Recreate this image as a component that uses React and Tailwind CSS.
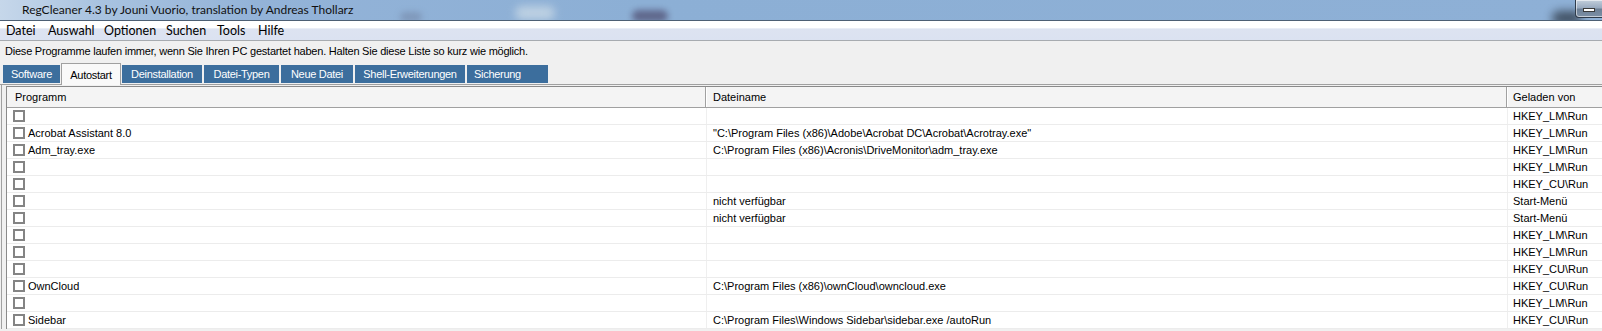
import React from "react";

const rows = [
  ["", "", "HKEY_LM\\Run"],
  ["Acrobat Assistant 8.0", "\"C:\\Program Files (x86)\\Adobe\\Acrobat DC\\Acrobat\\Acrotray.exe\"", "HKEY_LM\\Run"],
  ["Adm_tray.exe", "C:\\Program Files (x86)\\Acronis\\DriveMonitor\\adm_tray.exe", "HKEY_LM\\Run"],
  ["", "", "HKEY_LM\\Run"],
  ["", "", "HKEY_CU\\Run"],
  ["", "nicht verfügbar", "Start-Menü"],
  ["", "nicht verfügbar", "Start-Menü"],
  ["", "", "HKEY_LM\\Run"],
  ["", "", "HKEY_LM\\Run"],
  ["", "", "HKEY_CU\\Run"],
  ["OwnCloud", "C:\\Program Files (x86)\\ownCloud\\owncloud.exe", "HKEY_CU\\Run"],
  ["", "", "HKEY_LM\\Run"],
  ["Sidebar", "C:\\Program Files\\Windows Sidebar\\sidebar.exe /autoRun", "HKEY_CU\\Run"],
];

const tabs = [
  { label: "Software", w: "w-[57px]", align: "justify-center" },
  { label: "Autostart", w: "w-[60px]", active: true, align: "justify-center" },
  { label: "Deinstallation", w: "w-[80px]", align: "justify-center" },
  { label: "Datei-Typen", w: "w-[75px]", align: "justify-center" },
  { label: "Neue Datei", w: "w-[72px]", align: "justify-center" },
  { label: "Shell-Erweiterungen", w: "w-[110px]", align: "justify-center" },
  { label: "Sicherung", w: "w-[81px]", align: "justify-start pl-[7px]" },
];

const menu = [
  { label: "Datei", w: "w-[42px]" },
  { label: "Auswahl", w: "w-[56px]" },
  { label: "Optionen", w: "w-[62px]" },
  { label: "Suchen", w: "w-[51px]" },
  { label: "Tools", w: "w-[41px]" },
  { label: "Hilfe", w: "w-[40px]" },
];

export default function App() {
  return (
    <div className="w-[1602px] h-[331px] overflow-hidden bg-[#f0f0f0] text-black font-['Liberation_Sans',Arial,sans-serif]">
      {/* Title bar */}
      <div className="relative h-[21px] border-b border-[#4d5f73] bg-[linear-gradient(90deg,#c6d7ea_0%,#a9c3e0_6%,#93b3d8_16%,#8cafd5_40%,#8eb0d6_100%)] overflow-hidden">
        <div className="absolute left-[515px] top-[6px] w-[40px] h-[14px] rounded-full bg-[#c9d9e6] blur-[4px] opacity-80" />
        <div className="absolute left-[632px] top-[10px] w-[36px] h-[12px] rounded-full bg-[#4d4a6e] blur-[3px] opacity-70" />
        <div className="absolute left-[400px] top-[12px] w-[22px] h-[10px] rounded-full bg-[#6f7f9e] blur-[3px] opacity-50" />
        <div className="absolute left-[1552px] top-[11px] w-[30px] h-[14px] rounded-full bg-[#2e3a48] blur-[5px] opacity-80" />
        <div className="relative pl-[22px] pt-[2px] text-[12px] leading-[16px] font-['Lato','Noto_Sans',sans-serif] text-[#111]">
          RegCleaner 4.3 by Jouni Vuorio, translation by Andreas Thollarz
        </div>
        <div className="absolute left-[1575px] top-0 w-[40px] h-[18px] rounded-bl-[4px] border border-t-0 border-[#2f3b4a] bg-[linear-gradient(180deg,#c3cfdc_0%,#9aabc0_45%,#6d8096_55%,#7d90a6_100%)] shadow-[inset_0_0_0_1px_rgba(255,255,255,0.55)]">
          <div className="absolute left-[7px] top-[8px] w-[12px] h-[4px] bg-white border border-[#3a3a3a]" />
        </div>
      </div>

      {/* Menu bar */}
      <div className="h-[20px] border-b border-[#a7abb0] bg-[linear-gradient(180deg,#ffffff_0%,#ffffff_35%,#dde3f1_42%,#dbe2f1_100%)] flex items-center pl-[6px] font-['Lato','Noto_Sans',sans-serif] text-[12.5px] leading-[16px]">
        {menu.map((m) => (
          <div key={m.label} className={m.w}>{m.label}</div>
        ))}
      </div>

      {/* Description */}
      <div className="h-[22px] pl-[5px] pt-[3px] text-[11px] leading-[14px] tracking-[-0.22px]">
        Diese Programme laufen immer, wenn Sie Ihren PC gestartet haben. Halten Sie diese Liste so kurz wie möglich.
      </div>

      {/* Tabs */}
      <div className="h-[22px] border-b border-[#a0a0a0] flex pl-[3px]">
        {tabs.map((t) =>
          t.active ? (
            <div
              key={t.label}
              className={`${t.w} relative z-10 -ml-px mr-[1px] h-[22px] bg-[#f9f9f9] border border-b-0 border-[#a0a0a0] flex items-center ${t.align} text-[11px] leading-[14px] tracking-[-0.3px] text-black`}
            >
              {t.label}
            </div>
          ) : (
            <div
              key={t.label}
              className={`${t.w} mt-[2px] mr-[2px] h-[18px] bg-[#3c6e9d] flex items-center ${t.align} text-[11px] leading-[14px] tracking-[-0.3px] text-white`}
            >
              {t.label}
            </div>
          )
        )}
      </div>

      {/* Tab page */}
      <div className="ml-[1px] border-l border-[#a0a0a0] pt-[1px] pl-[4px]">
        <div className="border-l border-t border-[#8a8a8a] bg-white">
          {/* Header */}
          <div className="flex h-[21px] border-b border-[#a0a0a0] bg-[#f4f4f4] text-[11px] leading-[14px]">
            <div className="w-[699px] flex items-center pl-[8px] border-r border-[#a0a0a0]">Programm</div>
            <div className="w-[801px] flex items-center pl-[6px] border-l border-white border-r border-r-[#a0a0a0]">Dateiname</div>
            <div className="flex-1 flex items-center pl-[5px] border-l border-white">Geladen von</div>
          </div>
          {/* Rows */}
          {rows.map((r, i) => (
            <div key={i} className="flex h-[17px] border-b border-[#ececec] text-[11px] leading-[14px]">
              <div className="w-[699px] flex items-center pl-[6px]">
                <div className="w-[12px] h-[12px] border-2 border-[#848484] bg-white shrink-0" />
                <span className="ml-[3px] whitespace-nowrap">{r[0]}</span>
              </div>
              <div className="w-[801px] flex items-center pl-[6px] border-l border-[#efefef] whitespace-nowrap">{r[1]}</div>
              <div className="flex-1 flex items-center pl-[5px] border-l border-[#efefef] whitespace-nowrap">{r[2]}</div>
            </div>
          ))}
        </div>
      </div>
    </div>
  );
}
